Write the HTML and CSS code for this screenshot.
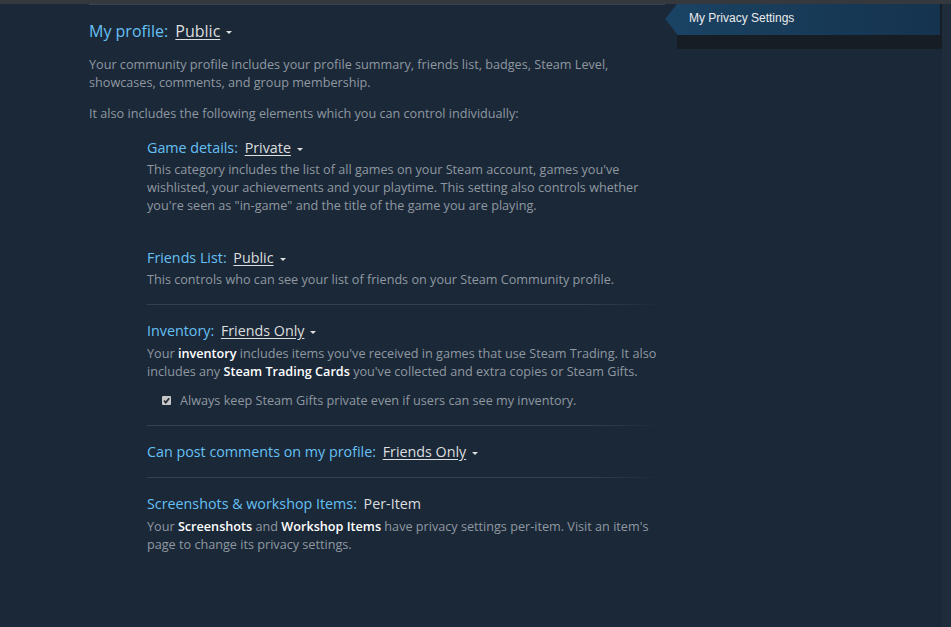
FILE: index.html
```html
<!DOCTYPE html>
<html lang="en">
<head>
    <meta charset="UTF-8">
    <meta name="viewport" content="width=device-width, initial-scale=1.0">
    <title>My Privacy Settings</title>
    <link rel="stylesheet" href="styles.css">
</head>
<body>
    <div class="topbar"></div>

    <div class="page">
        <!-- Main column -->
        <div class="main">
            <h2 class="profile-title">
                My profile:
                <span class="dropdown">Public</span><span class="arrow"></span>
            </h2>
            <p class="desc summary">Your community profile includes your profile summary, friends list, badges, Steam Level, showcases, comments, and group membership.</p>
            <p class="desc">It also includes the following elements which you can control individually:</p>

            <div class="subsections">
                <!-- Game details -->
                <div class="setting game">
                    <div class="setting-title">Game details: <span class="dropdown">Private</span><span class="arrow"></span></div>
                    <p class="desc">This category includes the list of all games on your Steam account, games you've wishlisted, your achievements and your playtime. This setting also controls whether you're seen as "in-game" and the title of the game you are playing.</p>
                </div>

                <!-- Friends list -->
                <div class="setting friends">
                    <div class="setting-title">Friends List: <span class="dropdown">Public</span><span class="arrow"></span></div>
                    <p class="desc">This controls who can see your list of friends on your Steam Community profile.</p>
                </div>

                <div class="divider"></div>

                <!-- Inventory -->
                <div class="setting inventory">
                    <div class="setting-title">Inventory: <span class="dropdown">Friends Only</span><span class="arrow"></span></div>
                    <p class="desc">Your <b>inventory</b> includes items you've received in games that use Steam Trading. It also includes any <b>Steam Trading Cards</b> you've collected and extra copies or Steam Gifts.</p>
                    <label class="check">
                        <span class="checkbox">
                            <svg width="9" height="9" viewBox="0 0 9 9"><path d="M2 4.6 L3.8 6.6 L7.2 2.2" fill="none" stroke="#2b2f35" stroke-width="1.8"/></svg>
                        </span>
                        Always keep Steam Gifts private even if users can see my inventory.
                    </label>
                </div>

                <div class="divider"></div>

                <!-- Comments -->
                <div class="setting comments">
                    <div class="setting-title">Can post comments on my profile: <span class="dropdown">Friends Only</span><span class="arrow"></span></div>
                </div>

                <div class="divider"></div>

                <!-- Screenshots -->
                <div class="setting">
                    <div class="setting-title">Screenshots &amp; workshop Items: <span class="fixed">Per-Item</span></div>
                    <p class="desc">Your <b>Screenshots</b> and <b>Workshop Items</b> have privacy settings per-item. Visit an item's page to change its privacy settings.</p>
                </div>
            </div>
        </div>

        <!-- Right side nav -->
        <div class="sidebar">
            <div class="nav-box">
                <div class="nav-tab active">My Privacy Settings</div>
            </div>
        </div>
        <div class="edge"></div>
    </div>
</body>
</html>
```

FILE: styles.css
```css
body {
    margin: 0;
    padding: 0;
    background-color: #1b2838;
    font-family: "Open Sans", "Noto Sans", Arial, sans-serif;
    color: #8f98a0;
}

.topbar {
    height: 4px;
    background-color: #35383c;
}

.page {
    display: flex;
    align-items: flex-start;
}

.main {
    margin-left: 89px;
    width: 576px;
    border-top: 1px solid #34455a;
    padding-top: 14px;
}

.profile-title {
    margin: 0;
    font-size: 16px;
    font-weight: normal;
    line-height: 24px;
    color: #66c0f4;
}

.dropdown {
    color: #dcdedf;
    text-decoration: underline;
    text-underline-offset: 2px;
    margin-left: 3px;
    cursor: pointer;
}

.arrow {
    display: inline-block;
    width: 0;
    height: 0;
    margin-left: 6px;
    vertical-align: middle;
    border-left: 3px solid transparent;
    border-right: 3px solid transparent;
    border-top: 3px solid #dcdedf;
}

.desc {
    margin: 13px 0 0;
    font-size: 12.65px;
    line-height: 18px;
}

.desc.summary {
    margin-top: 12px;
}

.desc b {
    color: #ffffff;
    font-weight: 600;
}

.subsections {
    margin-left: 58px;
    width: 516px;
    padding-top: 15px;
}

.setting-title {
    font-size: 14.3px;
    line-height: 22px;
    color: #66c0f4;
}

.setting .desc {
    margin-top: 2px;
}

.fixed {
    color: #dcdedf;
    margin-left: 3px;
}

.setting {
    padding: 15px 0 16px;
}

.setting.game {
    padding-top: 0;
    padding-bottom: 0;
}

.setting.game .desc,
.setting.friends .desc {
    margin-top: 1px;
}

.setting.friends {
    padding-top: 33px;
}

.setting.comments {
    padding-bottom: 14px;
}

.divider {
    height: 1px;
    background: linear-gradient(to right, #34404d 0%, #34404d 85%, rgba(52, 64, 77, 0));
}

.check {
    display: flex;
    align-items: center;
    margin: 11px 0 0 15px;
    font-size: 12.65px;
    line-height: 18px;
}

.checkbox {
    display: inline-flex;
    width: 9px;
    height: 9px;
    margin-right: 9px;
    background-color: #c8c8c8;
    border-radius: 1px;
}

.sidebar {
    display: flex;
}

.nav-box {
    margin-left: 12px;
    width: 265px;
    height: 45px;
    background-color: #171d25;
}

.nav-tab {
    position: relative;
    height: 31px;
    width: 263px;
    box-sizing: border-box;
    padding-left: 12px;
    font-family: "Liberation Sans", Arial, sans-serif;
    font-size: 12px;
    line-height: 28px;
    color: #ebebeb;
    background: linear-gradient(to right, #1a4262, #15334e);
}

.nav-tab.active::before {
    content: "";
    position: absolute;
    left: -12px;
    top: 0;
    border-top: 15.5px solid transparent;
    border-bottom: 15.5px solid transparent;
    border-right: 12px solid #1a4262;
}

.edge {
    flex: 1;
    align-self: stretch;
    min-height: 623px;
    background-color: #1f2c3c;
}
```
